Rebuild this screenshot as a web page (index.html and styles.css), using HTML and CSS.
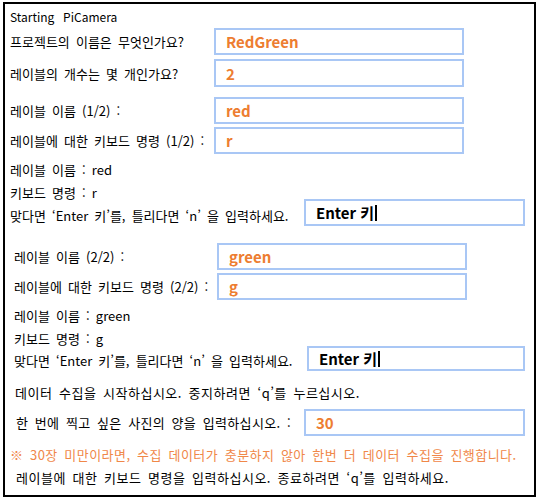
FILE: index.html
```html
<!DOCTYPE html>
<html lang="ko">
<head>
<meta charset="utf-8">
<title>PiCamera</title>
<link rel="stylesheet" href="styles.css">
</head>
<body>
<div class="frame">
  <div class="line title">Starting&nbsp; PiCamera</div>

  <div class="row r1 b1"><div class="label">프로젝트의 이름은 무엇인가요?</div><div class="field">RedGreen</div></div>
  <div class="row r2 b1"><div class="label">레이블의 개수는 몇 개인가요?</div><div class="field">2</div></div>

  <div class="row r3 b1"><div class="label">레이블 이름 (1/2) :</div><div class="field">red</div></div>
  <div class="row r4 b1"><div class="label">레이블에 대한 키보드 명령 (1/2) :</div><div class="field">r</div></div>
  <div class="line t1 b1">레이블 이름 : red</div>
  <div class="line t2 b1">키보드 명령 : r</div>
  <div class="row enter e1 b1"><div class="label">맞다면 ‘Enter 키’를, 틀리다면 ‘n’ 을 입력하세요.</div><div class="field key">Enter 키<span class="caret"></span></div></div>

  <div class="row r5 b2"><div class="label">레이블 이름 (2/2) :</div><div class="field">green</div></div>
  <div class="row r6 b2"><div class="label">레이블에 대한 키보드 명령 (2/2) :</div><div class="field">g</div></div>
  <div class="line t3 b2">레이블 이름 : green</div>
  <div class="line t2 b2">키보드 명령 : g</div>
  <div class="row enter e2 b2"><div class="label">맞다면 ‘Enter 키’를, 틀리다면 ‘n’ 을 입력하세요.</div><div class="field key">Enter 키<span class="caret"></span></div></div>

  <div class="line t4 b3 wide">데이터 수집을 시작하십시오. 중지하려면 ‘q’를 누르십시오.</div>
  <div class="row r7 b4"><div class="label mid">한 번에 찍고 싶은 사진의 양을 입력하십시오. :</div><div class="field">30</div></div>
  <div class="line note">※ 30장 미만이라면, 수집 데이터가 충분하지 않아 한번 더 데이터 수집을 진행합니다.</div>
  <div class="line t2 b4 wide">레이블에 대한 키보드 명령을 입력하십시오. 종료하려면 ‘q’를 입력하세요.</div>
</div>
</body>
</html>
```

FILE: styles.css
```css
html, body {
  margin: 0;
  padding: 0;
  background: #fff;
}
body {
  font-family: "Noto Sans CJK KR", "Noto Sans", sans-serif;
  font-size: 13px;
  word-spacing: 2.5px;
  color: #000;
}
.frame {
  margin: 2px 0 0 3px;
  width: 529px;
  height: 491px;
  border: 2px solid #000;
  display: flex;
  flex-direction: column;
}
.line {
  height: 20px;
  line-height: 20px;
  white-space: nowrap;
}
.row {
  display: flex;
  align-items: center;
  height: 27px;
}
.label {
  white-space: nowrap;
  flex: none;
}
.field {
  flex: none;
  box-sizing: border-box;
  height: 100%;
  border: 2px solid #a9c7f5;
  padding-left: 10px;
  font-size: 15px;
  font-weight: bold;
  word-spacing: 0;
  letter-spacing: 0;
  color: #ed7d31;
  display: flex;
  align-items: center;
}
.key {
  color: #000;
}
.caret {
  display: inline-block;
  width: 2px;
  height: 16px;
  background: #000;
  margin-left: 1px;
}
.wide { letter-spacing: 0.5px; }
.mid { letter-spacing: 0.35px; }

.b1 { padding-left: 5px; }
.b1 .label { width: 204px; }
.b1 .field { width: 250px; }
.b2 { padding-left: 9px; }
.b2 .label { width: 203px; }
.b2 .field { width: 250px; }
.b3 { padding-left: 10px; }
.b4 { padding-left: 11px; }
.b4 .label { width: 288px; }
.b4 .field { width: 221px; }

.enter { align-items: flex-end; }
.enter .label { height: 20px; line-height: 20px; }
.e1 .label { width: 294px; }
.e1 .field { width: 221px; }
.e2 { height: 25px; }
.e2 .label { width: 293px; }
.e2 .field { width: 218px; }

.title { margin-top: 4px; height: 18px; line-height: 18px; padding-left: 5px; font-size: 12px; word-spacing: 1px; }
.r1 { margin-top: 2px; }
.r2 { margin-top: 4px; height: 28px; }
.r3 { margin-top: 10px; }
.r4 { margin-top: 3px; }
.t1 { margin-top: 6px; }
.t2 { margin-top: 3px; }
.e1 { margin-top: -4px; }
.r5 { margin-top: 17px; }
.r6 { margin-top: 3px; }
.t3 { margin-top: 6px; }
.e2 { margin-top: -3px; }
.t4 { margin-top: 12px; }
.r7 { margin-top: 6px; }
.note { margin-top: 9px; padding-left: 5px; color: #f08748; letter-spacing: 0.45px; }
```
